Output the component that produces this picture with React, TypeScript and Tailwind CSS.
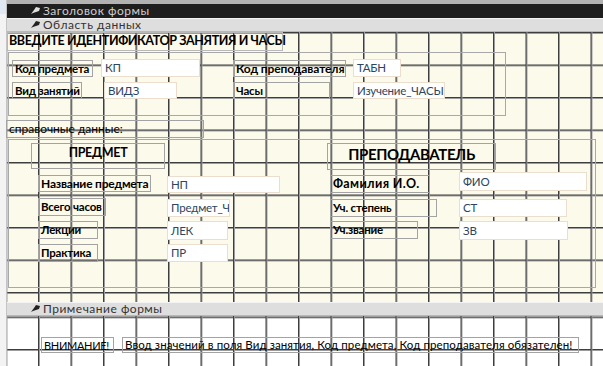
import type { ReactNode } from "react"

const font = { fontFamily: 'Lato, "Open Sans", sans-serif' }

const SectionIcon = ({ color }: { color: string }) => (
    <svg width="9" height="8" viewBox="0 0 9 8" className="mr-[3px]">
        <path d="M0 7 L3 3 L5 0 L9 1 L8 4 L5 5 L2 6 Z" fill={color} />
    </svg>
)

const SectionBar = ({ title, dark }: { title: string; dark?: boolean }) => (
    <div
        className={
            dark
                ? "h-[14px] flex items-center pl-[24px] bg-[#1e1e1e] text-[#cfcfcf] text-[12px] tracking-[0.5px]"
                : "h-[14px] flex items-center pl-[24px] bg-[#dedede] border-t border-[#f4f4f4] border-b border-b-[#b8b8b8] text-[#333] text-[12px] tracking-[0.5px]"
        }
    >
        <SectionIcon color={dark ? "#e0e0e0" : "#222"} />
        <span className="leading-none">{title}</span>
    </div>
)

type Box = { x: number; y: number; w: number; h: number }

const Label = ({ x, y, w, h, children, cls = "font-bold text-[11.5px] tracking-[-0.2px]" }: Box & { children: ReactNode; cls?: string }) => (
    <div
        className={`absolute border border-[#a3a3a3] flex items-center pl-[2px] whitespace-nowrap overflow-hidden text-black leading-none ${cls}`}
        style={{ left: x, top: y, width: w, height: h }}
    >
        {children}
    </div>
)

const Field = ({ x, y, w, h, children }: Box & { children: ReactNode }) => (
    <div
        className="absolute bg-white border border-[#eadfce] flex items-center pl-[3px] whitespace-nowrap overflow-hidden text-[11.5px] tracking-[-0.2px] text-[#2c4660] leading-none"
        style={{ left: x, top: y, width: w, height: h }}
    >
        {children}
    </div>
)

const Frame = ({ x, y, w, h }: Box) => (
    <div className="absolute border border-[#a8a8a8]" style={{ left: x, top: y, width: w, height: h }} />
)

const gridCream =
    "bg-[#fcfaeb] bg-[linear-gradient(to_right,#3d3d3d_0,#3d3d3d_1px,#9a9a9a_1px,#9a9a9a_1.5px,transparent_1.5px),linear-gradient(to_bottom,#3d3d3d_0,#3d3d3d_1px,#9a9a9a_1px,#9a9a9a_1.5px,transparent_1.5px)] bg-[size:32.5px_32.5px] bg-[position:31px_0px]"
const gridWhite =
    "bg-white bg-[linear-gradient(to_right,#3d3d3d_0,#3d3d3d_1px,#9a9a9a_1px,#9a9a9a_1.5px,transparent_1.5px),linear-gradient(to_bottom,#3d3d3d_0,#3d3d3d_1px,#9a9a9a_1px,#9a9a9a_1.5px,transparent_1.5px)] bg-[size:32.5px_32.5px] bg-[position:31px_33px]"

export default function App() {
    return (
        <div className="w-[603px] h-[366px] overflow-hidden flex bg-white" style={font}>
            {/* ruler */}
            <div className="w-[7px] flex flex-col bg-[#f3f3f3] border-r border-[#c4c4c4]">
                <div className="h-[14px] bg-[#dfe8f3]" />
            </div>

            <div className="flex-1 flex flex-col">
                <div className="h-[4px] bg-[#b2b2b2]" />
                <SectionBar title="Заголовок формы" dark />
                <SectionBar title="Область данных" />

                {/* detail section */}
                <div className={`relative h-[270px] ${gridCream}`}>
                    <div className="absolute left-0 top-0 w-[276px] h-[19px] border border-[#b9b9b9] flex items-center pl-[1px] text-[12.5px] tracking-[-0.4px] font-bold text-black whitespace-nowrap leading-none">
                        ВВЕДИТЕ ИДЕНТИФИКАТОР ЗАНЯТИЯ И ЧАСЫ
                    </div>

                    <Frame x={1} y={20} w={498} h={64} />
                    <Label x={5} y={28} w={81} h={17}>Код предмета</Label>
                    <Field x={94} y={27} w={99} h={18}>КП</Field>
                    <Label x={5} y={50} w={70} h={17}>Вид занятий</Label>
                    <Field x={97} y={50} w={73} h={17}>ВИДЗ</Field>
                    <Label x={226} y={28} w={113} h={17} cls="font-bold text-[12px] tracking-[-0.1px]">Код преподавателя</Label>
                    <Field x={346} y={27} w={48} h={18}>ТАБН</Field>
                    <Label x={226} y={50} w={97} h={17}>Часы</Label>
                    <Field x={346} y={50} w={92} h={17}>Изучение_ЧАСЫ</Field>

                    <Label x={-1} y={88} w={198} h={18} cls="text-[12px]">справочные данные:</Label>

                    <Frame x={1} y={107} w={588} h={149} />

                    <div className="absolute left-[24px] top-[111px] w-[134px] h-[26px] border border-[#a3a3a3] flex justify-center pt-[3px] text-[12.5px] tracking-[-0.3px] font-bold text-black leading-none">
                        ПРЕДМЕТ
                    </div>
                    <Label x={31} y={143} w={113} h={17} cls="font-bold text-[12px] tracking-[-0.2px]">Название предмета</Label>
                    <Field x={160} y={144} w={113} h={17}>НП</Field>
                    <Label x={31} y={166} w={68} h={18}>Всего часов</Label>
                    <Field x={160} y={167} w={63} h={18}>Предмет_Часы</Field>
                    <Label x={31} y={189} w={60} h={18}>Лекции</Label>
                    <Field x={160} y={189} w={61} h={19}>ЛЕК</Field>
                    <Label x={31} y={212} w={60} h={18}>Практика</Label>
                    <Field x={160} y={212} w={61} h={18}>ПР</Field>

                    <div className="absolute left-[320px] top-[111px] w-[169px] h-[27px] border border-[#a3a3a3] flex justify-center pt-[3px] text-[15px] tracking-[-0.4px] font-bold text-black leading-none">
                        ПРЕПОДАВАТЕЛЬ
                    </div>
                    <Label x={323} y={143} w={100} h={18} cls="font-bold text-[12.5px] tracking-[0.4px]">Фамилия И.О.</Label>
                    <Field x={452} y={140} w={128} h={19}>ФИО</Field>
                    <Label x={323} y={167} w={107} h={18}>Уч. степень</Label>
                    <Field x={452} y={167} w={108} h={18}>СТ</Field>
                    <Label x={323} y={189} w={88} h={18}>Уч.звание</Label>
                    <Field x={452} y={189} w={109} h={19}>ЗВ</Field>
                </div>

                <SectionBar title="Примечание формы" />

                {/* form footer */}
                <div className={`relative flex-1 ${gridWhite}`}>
                    <Label x={34} y={21} w={73} h={16} cls="text-[11px] tracking-[-0.3px]">ВНИМАНИЕ!</Label>
                    <Label x={115} y={21} w={457} h={16} cls="text-[11.5px] tracking-[0.1px]">
                        Ввод значений в поля Вид занятия, Код предмета, Код преподавателя обязателен!
                    </Label>
                </div>
            </div>
        </div>
    )
}
